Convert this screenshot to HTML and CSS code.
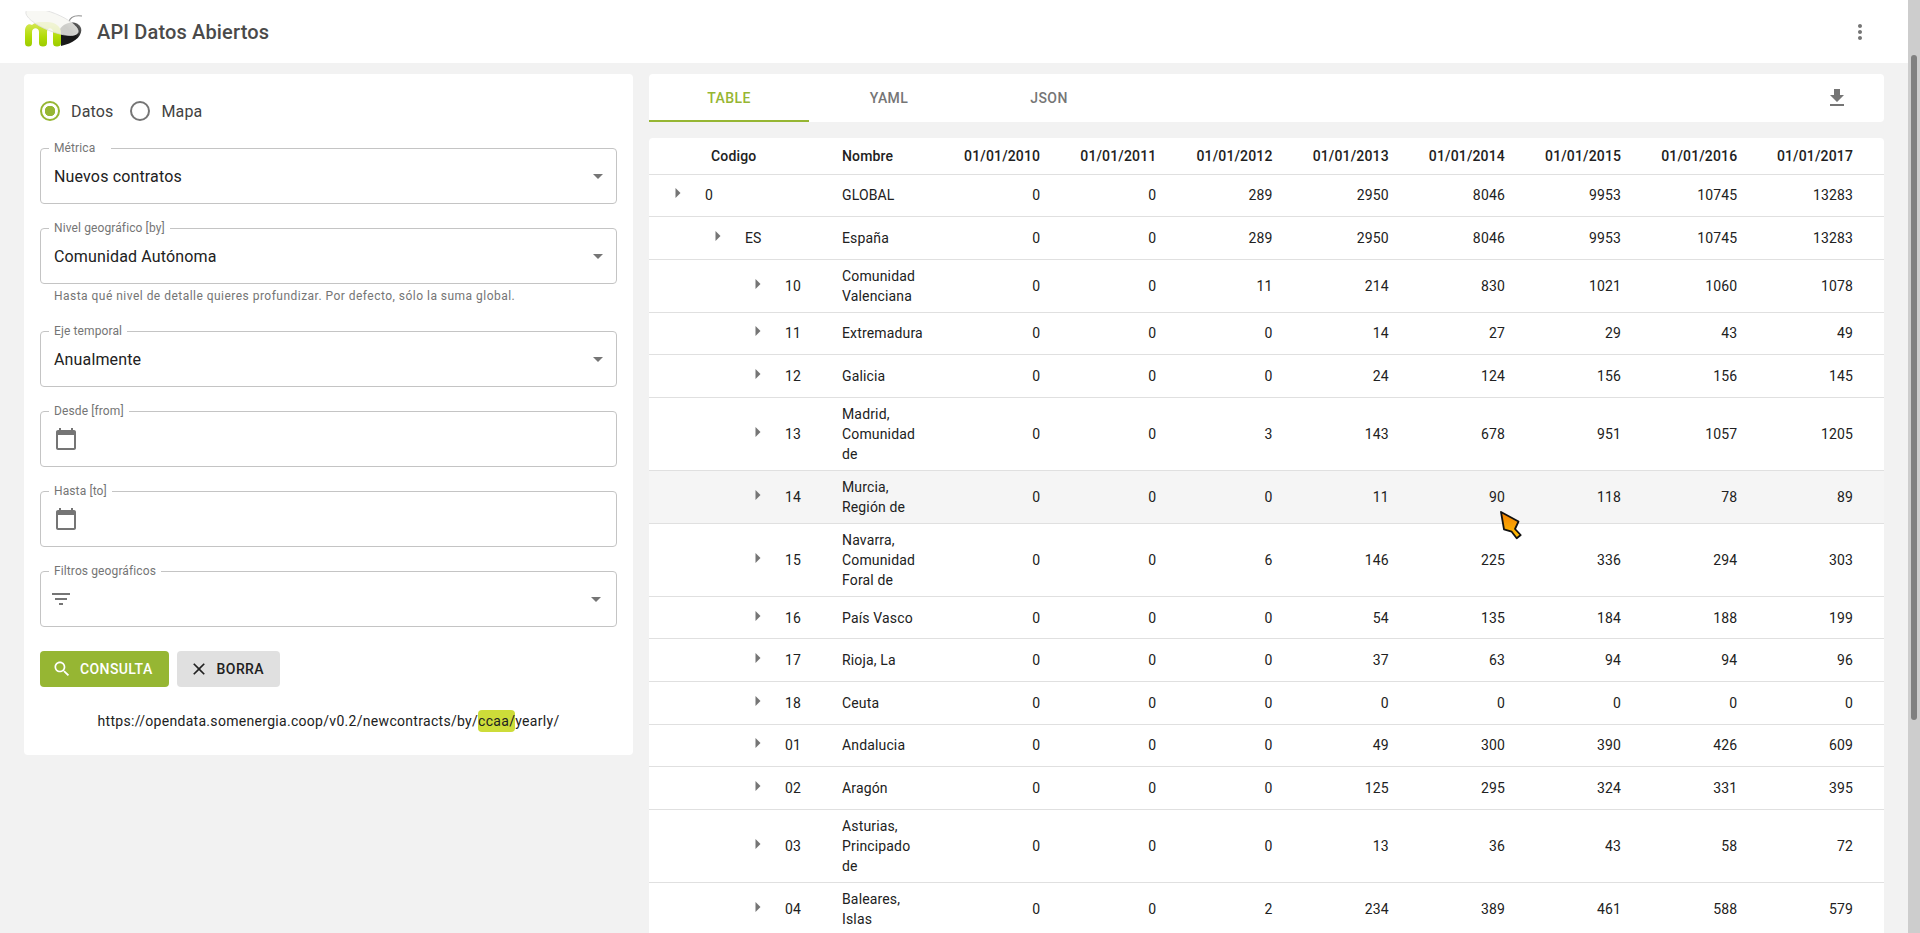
FILE: index.html
```html
<!DOCTYPE html>
<html lang="es">

<head>
    <meta charset="UTF-8">
    <meta name="viewport" content="width=device-width, initial-scale=1.0">
    <title>API Datos Abiertos</title>
    <link rel="stylesheet" href="styles.css">
</head>

<body>
    <div class="app">
        <!-- Top bar -->
        <header class="topbar">
            <svg class="logo" width="58" height="40" viewBox="0 -1 58 40">
                <defs>
                    <linearGradient id="legs" x1="0" y1="0" x2="0" y2="1">
                        <stop offset="0" stop-color="#d8e85a" />
                        <stop offset="0.6" stop-color="#b2dc08" />
                        <stop offset="1" stop-color="#9ccb00" />
                    </linearGradient>
                    <linearGradient id="bodyfill" x1="1" y1="0" x2="0" y2="1">
                        <stop offset="0" stop-color="#777" />
                        <stop offset="0.45" stop-color="#151515" />
                        <stop offset="1" stop-color="#1c1c1c" />
                    </linearGradient>
                </defs>
                <path d="M45 10 C46 5 50 3 58 4" fill="none" stroke="#8c8c8c" stroke-width="1.2" />
                <path d="M37 34 L36 17 C41 9 54 8 57 16 C59 24 50 31 37 34 Z" fill="url(#bodyfill)" />
                <path d="M1 30 L1 19 C1 13 5 11 8 13 C10 11 13 10 16 10 L23 10 C27 10 31 11 33 13 C36 15 37 18 37 21 L37 31 A4 3.5 0 0 1 29 31 L29 20 C29 15 23 15 23 20 L23 31 A4 3.5 0 0 1 15 31 L15 20 C15 15 8 15 8 20 L8 31 A3.5 3.5 0 0 1 1 31 Z" fill="url(#legs)" />
                <ellipse cx="28" cy="10" rx="28" ry="9" transform="rotate(22 28 10)" fill="#f6f7f2" fill-opacity="0.82" stroke="#dcdcdc" stroke-width="0.7" />
            </svg>
            <h1 class="title">API Datos Abiertos</h1>
            <button class="icon-btn more-btn">
                <svg width="24" height="24" viewBox="0 0 24 24"><path d="M12 8c1.1 0 2-.9 2-2s-.9-2-2-2-2 .9-2 2 .9 2 2 2zm0 2c-1.1 0-2 .9-2 2s.9 2 2 2 2-.9 2-2-.9-2-2-2zm0 6c-1.1 0-2 .9-2 2s.9 2 2 2 2-.9 2-2-.9-2-2-2z" /></svg>
            </button>
        </header>

        <main class="content">
            <!-- Query form -->
            <section class="card form-card">
                <div class="radio-row">
                    <label class="radio radio-on"><span class="radio-dot"></span>Datos</label>
                    <label class="radio"><span class="radio-dot"></span>Mapa</label>
                </div>

                <div class="field">
                    <span class="field-label field-label-wide">Métrica</span>
                    <span class="field-value">Nuevos contratos</span>
                    <span class="arrow"></span>
                </div>

                <div class="field field-helped">
                    <span class="field-label">Nivel geográfico [by]</span>
                    <span class="field-value">Comunidad Autónoma</span>
                    <span class="arrow"></span>
                </div>
                <p class="helper">Hasta qué nivel de detalle quieres profundizar. Por defecto, sólo la suma global.</p>

                <div class="field">
                    <span class="field-label">Eje temporal</span>
                    <span class="field-value">Anualmente</span>
                    <span class="arrow"></span>
                </div>

                <div class="field">
                    <span class="field-label">Desde [from]</span>
                    <svg class="field-icon" width="24" height="24" viewBox="0 0 24 24"><path d="M20 3h-1V1h-2v2H7V1H5v2H4c-1.1 0-2 .9-2 2v16c0 1.1.9 2 2 2h16c1.1 0 2-.9 2-2V5c0-1.1-.9-2-2-2zm0 18H4V8h16v13z" /></svg>
                </div>

                <div class="field">
                    <span class="field-label">Hasta [to]</span>
                    <svg class="field-icon" width="24" height="24" viewBox="0 0 24 24"><path d="M20 3h-1V1h-2v2H7V1H5v2H4c-1.1 0-2 .9-2 2v16c0 1.1.9 2 2 2h16c1.1 0 2-.9 2-2V5c0-1.1-.9-2-2-2zm0 18H4V8h16v13z" /></svg>
                </div>

                <div class="field field-filter">
                    <span class="field-label">Filtros geográficos</span>
                    <svg class="field-icon" width="24" height="24" viewBox="0 0 24 24"><path d="M10 18h4v-2h-4v2zM3 6v2h18V6H3zm3 7h12v-2H6v2z" /></svg>
                    <span class="arrow"></span>
                </div>

                <div class="btn-row">
                    <button class="btn btn-primary">
                        <svg width="20" height="20" viewBox="0 0 24 24"><path d="M15.5 14h-.79l-.28-.27C15.41 12.59 16 11.11 16 9.5 16 5.91 13.09 3 9.5 3S3 5.91 3 9.5 5.91 16 9.5 16c1.61 0 3.09-.59 4.23-1.57l.27.28v.79l5 4.99L20.49 19l-4.99-5zm-6 0C7.01 14 5 11.99 5 9.5S7.01 5 9.5 5 14 7.01 14 9.5 11.99 14 9.5 14z" /></svg>
                        Consulta
                    </button>
                    <button class="btn btn-grey">
                        <svg width="20" height="20" viewBox="0 0 24 24"><path d="M19 6.41L17.59 5 12 10.59 6.41 5 5 6.41 10.59 12 5 17.59 6.41 19 12 13.41 17.59 19 19 17.59 13.41 12z" /></svg>
                        Borra
                    </button>
                </div>

                <p class="url">https://opendata.somenergia.coop/v0.2/newcontracts/by/<span class="url-mark">ccaa/</span>yearly/</p>
            </section>

            <!-- Results -->
            <section class="results">
                <div class="card tabs">
                    <div class="tab tab-active">Table</div>
                    <div class="tab">Yaml</div>
                    <div class="tab">Json</div>
                    <button class="icon-btn download-btn">
                        <svg width="24" height="24" viewBox="0 0 24 24"><path d="M19 9h-4V3H9v6H5l7 7 7-7zM5 18v2h14v-2H5z" /></svg>
                    </button>
                </div>

                <div class="card table-card">
                    <table class="data-table">
                        <colgroup>
                            <col class="col-code">
                            <col class="col-name">
                            <col class="col-date" span="7">
                            <col class="col-last">
                        </colgroup>
                        <thead>
                            <tr>
                                <th class="th-code">Codigo</th>
                                <th class="th-name">Nombre</th>
                                <th>01/01/2010</th>
                                <th>01/01/2011</th>
                                <th>01/01/2012</th>
                                <th>01/01/2013</th>
                                <th>01/01/2014</th>
                                <th>01/01/2015</th>
                                <th>01/01/2016</th>
                                <th>01/01/2017</th>
                            </tr>
                        </thead>
                        <tbody id="rows"></tbody>
                    </table>
                </div>
            </section>
        </main>
    </div>

    <!-- Page scrollbar -->
    <div class="scrollbar"><div class="scroll-thumb"></div></div>

    <!-- Mouse pointer in the capture -->
    <svg class="pointer" width="26" height="30" viewBox="0 0 26 30">
        <defs>
            <linearGradient id="pointerfill" x1="0" y1="0" x2="0" y2="1">
                <stop offset="0" stop-color="#f27f00" />
                <stop offset="1" stop-color="#ffc107" />
            </linearGradient>
        </defs>
        <path d="M3 1 L20.5 10.5 L17 18 L22.7 24 L18.7 27.3 L13.7 20.7 L6 18.3 Z" fill="url(#pointerfill)" stroke="#111" stroke-width="1.8" stroke-linejoin="round" />
    </svg>

    <script>
        // level, code, name, values for 2010..2017
        const rows = [
            [0, '0', 'GLOBAL', [0, 0, 289, 2950, 8046, 9953, 10745, 13283]],
            [1, 'ES', 'España', [0, 0, 289, 2950, 8046, 9953, 10745, 13283]],
            [2, '10', 'Comunidad Valenciana', [0, 0, 11, 214, 830, 1021, 1060, 1078]],
            [2, '11', 'Extremadura', [0, 0, 0, 14, 27, 29, 43, 49]],
            [2, '12', 'Galicia', [0, 0, 0, 24, 124, 156, 156, 145]],
            [2, '13', 'Madrid, Comunidad de', [0, 0, 3, 143, 678, 951, 1057, 1205]],
            [2, '14', 'Murcia, Región de', [0, 0, 0, 11, 90, 118, 78, 89]],
            [2, '15', 'Navarra, Comunidad Foral de', [0, 0, 6, 146, 225, 336, 294, 303]],
            [2, '16', 'País Vasco', [0, 0, 0, 54, 135, 184, 188, 199]],
            [2, '17', 'Rioja, La', [0, 0, 0, 37, 63, 94, 94, 96]],
            [2, '18', 'Ceuta', [0, 0, 0, 0, 0, 0, 0, 0]],
            [2, '01', 'Andalucia', [0, 0, 0, 49, 300, 390, 426, 609]],
            [2, '02', 'Aragón', [0, 0, 0, 125, 295, 324, 331, 395]],
            [2, '03', 'Asturias, Principado de', [0, 0, 0, 13, 36, 43, 58, 72]],
            [2, '04', 'Baleares, Islas', [0, 0, 2, 234, 389, 461, 588, 579]]
        ];

        const caret = '<svg class="caret" width="6" height="10" viewBox="0 0 6 10"><path d="M0.5 0 L5.5 5 L0.5 10 Z" /></svg>';
        let html = '';
        rows.forEach(function (r) {
            const hover = r[1] === '14' ? ' class="row-hover"' : '';
            html += '<tr' + hover + '>';
            html += '<td><div class="tree tree-' + r[0] + '">' + caret + '<span>' + r[1] + '</span></div></td>';
            html += '<td class="td-name">' + r[2] + '</td>';
            r[3].forEach(function (v) {
                html += '<td>' + v + '</td>';
            });
            html += '</tr>';
        });
        document.getElementById('rows').innerHTML = html;
    </script>
</body>

</html>
```
FILE: styles.css
```css
* {
    margin: 0;
    padding: 0;
    box-sizing: border-box;
}

html,
body {
    height: 100%;
    overflow: hidden;
}

body {
    display: flex;
    font-family: Roboto, sans-serif;
    background-color: #f2f2f2;
    color: #212121;
}

.app {
    flex: 1;
    min-width: 0;
    height: 100vh;
    overflow: hidden;
}

/* Top bar */
.topbar {
    display: flex;
    align-items: center;
    height: 63px;
    padding: 0 24px;
    background-color: #fff;
}

.logo {
    flex: none;
    margin-right: 15px;
    margin-top: -1px;
}

.title {
    font-size: 20px;
    font-weight: 500;
    letter-spacing: 0.0075em;
    color: #4a4a4a;
}

.icon-btn {
    display: flex;
    border: none;
    background: none;
    cursor: pointer;
}

.icon-btn svg {
    fill: #757575;
}

.more-btn {
    margin-left: auto;
    margin-right: 12px;
}

/* Main columns */
.content {
    display: flex;
    align-items: flex-start;
    gap: 16px;
    padding: 11px 24px 0;
}

.card {
    background-color: #fff;
    border-radius: 4px;
}

.form-card {
    flex: none;
    width: 609px;
    height: 681px;
    padding: 25px 16px 0;
}

.results {
    flex: 1;
    min-width: 0;
}

/* Radios */
.radio-row {
    display: flex;
    gap: 17px;
    height: 24px;
    margin-bottom: 25px;
}

.radio {
    display: flex;
    align-items: center;
    gap: 11px;
    font-size: 16px;
    letter-spacing: 0.00938em;
    color: #424242;
}

.radio-dot {
    width: 20px;
    height: 20px;
    border: 2px solid #757575;
    border-radius: 50%;
}

.radio-on .radio-dot {
    border-color: #96b633;
    background: radial-gradient(circle, #96b633 0 5px, transparent 5.5px);
}

/* Outlined fields */
.field {
    position: relative;
    display: flex;
    align-items: center;
    height: 56px;
    margin-bottom: 24px;
    padding-left: 13px;
    border: 1px solid #c4c4c4;
    border-radius: 4px;
}

.field-helped {
    margin-bottom: 0;
}

.field-label {
    position: absolute;
    top: -8px;
    left: 8px;
    padding: 0 5px;
    font-size: 12px;
    line-height: 14px;
    letter-spacing: 0.00938em;
    color: #757575;
    background-color: #fff;
}

.field-label-wide {
    padding-right: 16px;
}

.field-value {
    font-size: 16px;
    letter-spacing: 0.00938em;
    color: #212121;
}

.field-icon {
    fill: #757575;
}

.field-filter {
    padding-left: 8px;
}

.arrow {
    margin-left: auto;
    margin-right: 13px;
    border-left: 5px solid transparent;
    border-right: 5px solid transparent;
    border-top: 5px solid #757575;
}

.field-filter .arrow {
    margin-right: 15px;
}

.helper {
    height: 47px;
    padding: 5px 14px 0;
    font-size: 12px;
    line-height: 14px;
    letter-spacing: 0.475px;
    color: #757575;
}

/* Buttons */
.btn-row {
    display: flex;
    gap: 8px;
}

.btn {
    display: flex;
    align-items: center;
    gap: 8px;
    height: 36px;
    padding: 0 16px 0 12px;
    border: none;
    border-radius: 4px;
    font-family: inherit;
    font-size: 14px;
    font-weight: 500;
    letter-spacing: 0.02857em;
    text-transform: uppercase;
    cursor: pointer;
}

.btn-primary {
    background-color: #96b633;
    color: #fff;
}

.btn-primary svg {
    fill: #fff;
}

.btn-grey {
    background-color: #e0e0e0;
    color: #212121;
}

.btn-grey svg {
    fill: #212121;
}

.url {
    margin-top: 23px;
    font-size: 14px;
    line-height: 22px;
    letter-spacing: 0.3px;
    text-align: center;
    color: #212121;
}

.url-mark {
    display: inline-block;
    border-radius: 4px;
    background-color: #cddc39;
}

/* Tabs */
.tabs {
    display: flex;
    align-items: stretch;
    height: 48px;
    margin-bottom: 16px;
}

.tab {
    width: 160px;
    font-size: 14px;
    font-weight: 500;
    line-height: 48px;
    letter-spacing: 0.02857em;
    text-align: center;
    text-transform: uppercase;
    color: #757575;
}

.tab-active {
    color: #96b633;
    border-bottom: 2px solid #96b633;
}

.download-btn {
    align-items: center;
    margin-left: auto;
    margin-right: 35px;
}

/* Table */
.table-card {
    overflow: hidden;
}

.data-table {
    width: 100%;
    table-layout: fixed;
    border-collapse: collapse;
    font-size: 14px;
    letter-spacing: 0.01071em;
}

.col-code {
    width: 177px;
}

.col-name {
    width: 114px;
}

.col-date {
    width: 116.2px;
}

.data-table th,
.data-table td {
    padding: 0 16px;
    line-height: 20px;
    text-align: right;
    border-bottom: 1px solid #e0e0e0;
    color: #212121;
}

.data-table th {
    height: 36px;
    font-weight: 500;
}

.data-table td {
    height: 42.6px;
    padding-top: 6px;
    padding-bottom: 6px;
}

.data-table .th-code {
    padding-left: 62px;
    text-align: left;
}

.data-table .th-name,
.data-table .td-name {
    text-align: left;
}

.data-table th:last-child,
.data-table td:last-child {
    padding-right: 31px;
}

.row-hover {
    background-color: #f5f5f5;
}

.tree {
    display: flex;
    align-items: center;
    gap: 24px;
    text-align: left;
}

.tree-0 {
    padding-left: 10px;
}

.tree-1 {
    padding-left: 50px;
}

.tree-2 {
    padding-left: 90px;
}

.caret {
    flex: none;
    margin-bottom: 4px;
    fill: #757575;
}

/* Scrollbar */
.scrollbar {
    flex: none;
    width: 12px;
    height: 100vh;
    padding: 55px 3px 0;
    background-color: #cdcdcd;
}

.scroll-thumb {
    height: 665px;
    border-radius: 3px;
    background-color: #808080;
}

/* Pointer */
.pointer {
    position: fixed;
    left: 1498px;
    top: 511px;
}
```
